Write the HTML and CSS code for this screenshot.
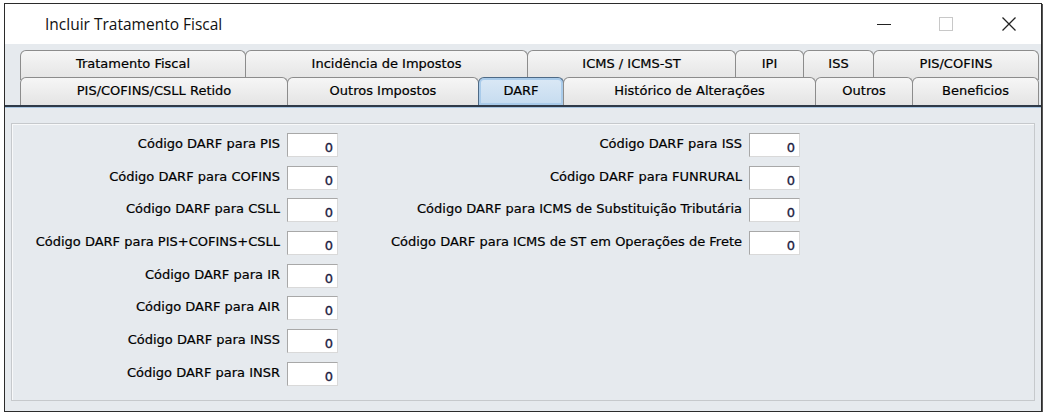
FILE: index.html
```html
<!DOCTYPE html>
<html lang="pt-BR">
<head>
    <meta charset="UTF-8">
    <title>Incluir Tratamento Fiscal</title>
    <link rel="stylesheet" href="styles.css">
</head>
<body>
    <div class="window">
        <div class="titlebar">
            <span class="title">Incluir Tratamento Fiscal</span>
            <div class="controls">
                <span class="btn-min"></span>
                <span class="btn-max"></span>
                <svg class="btn-close" width="16" height="16" viewBox="0 0 16 16">
                    <path d="M1.5 1.5 L14.5 14.5 M14.5 1.5 L1.5 14.5" stroke="#222" stroke-width="1.3" fill="none"/>
                </svg>
            </div>
        </div>
        <div class="body">
            <div class="tabs">
                <div class="tab-row row-1">
                    <div class="tab">Tratamento Fiscal</div>
                    <div class="tab">Incidência de Impostos</div>
                    <div class="tab">ICMS / ICMS-ST</div>
                    <div class="tab">IPI</div>
                    <div class="tab">ISS</div>
                    <div class="tab">PIS/COFINS</div>
                </div>
                <div class="tab-row row-2">
                    <div class="tab">PIS/COFINS/CSLL Retido</div>
                    <div class="tab">Outros Impostos</div>
                    <div class="tab active">DARF</div>
                    <div class="tab">Histórico de Alterações</div>
                    <div class="tab">Outros</div>
                    <div class="tab">Beneficios</div>
                </div>
            </div>
            <div class="tab-line"></div>
            <div class="content">
                <div class="panel">
                    <div class="col col-left">
                        <div class="field"><label>Código DARF para PIS</label><span class="input">0</span></div>
                        <div class="field"><label>Código DARF para COFINS</label><span class="input">0</span></div>
                        <div class="field"><label>Código DARF para CSLL</label><span class="input">0</span></div>
                        <div class="field"><label>Código DARF para PIS+COFINS+CSLL</label><span class="input">0</span></div>
                        <div class="field"><label>Código DARF para IR</label><span class="input">0</span></div>
                        <div class="field"><label>Código DARF para AIR</label><span class="input">0</span></div>
                        <div class="field"><label>Código DARF para INSS</label><span class="input">0</span></div>
                        <div class="field"><label>Código DARF para INSR</label><span class="input">0</span></div>
                    </div>
                    <div class="col col-right">
                        <div class="field"><label>Código DARF para ISS</label><span class="input">0</span></div>
                        <div class="field"><label>Código DARF para FUNRURAL</label><span class="input">0</span></div>
                        <div class="field"><label>Código DARF para ICMS de Substituição Tributária</label><span class="input">0</span></div>
                        <div class="field"><label>Código DARF para ICMS de ST em Operações de Frete</label><span class="input">0</span></div>
                    </div>
                </div>
            </div>
        </div>
    </div>
</body>
</html>
```

FILE: styles.css
```css
body {
    margin: 0;
    background: #fff;
    font-family: "DejaVu Sans", "Liberation Sans", sans-serif;
    color: #000;
}
.window {
    width: 1036px;
    height: 407px;
    margin: 3px 0 0 4px;
    border: 1px solid #2b2b2b;
    box-shadow: 1px 1px 0 #555;
    display: flex;
    flex-direction: column;
    background: #e6eaee;
}
.titlebar {
    height: 40px;
    background: #fff;
    display: flex;
    align-items: center;
    justify-content: space-between;
}
.title {
    font-family: "Open Sans", "Liberation Sans", sans-serif;
    font-size: 15.5px;
    color: #111;
    margin-left: 40px;
}
.controls {
    display: flex;
    align-items: center;
    gap: 48px;
    margin-right: 24px;
}
.btn-min {
    width: 14px;
    height: 1px;
    background: #222;
}
.btn-max {
    width: 12px;
    height: 12px;
    border: 1px solid #c8c8c8;
}
.btn-close {
    display: block;
}

.body {
    flex: 1;
    display: flex;
    flex-direction: column;
}
.tabs {
    padding: 6px 0 0 15px;
}
.tab-row {
    display: flex;
}
.row-1 {
    height: 27px;
}
.row-2 {
    height: 27px;
}
.tab {
    box-sizing: border-box;
    margin-right: -1px;
    border: 1px solid #8c8c8c;
    border-bottom: none;
    border-radius: 6px 6px 0 0;
    background: linear-gradient(#f6f6f6, #e4e4e4);
    font-size: 13px;
    text-align: center;
    padding-top: 5px;
    -webkit-text-stroke: 0.2px #000;
}
.row-1 .tab {
    height: 30px;
}
.row-2 .tab {
    height: 28px;
    padding-top: 5px;
    position: relative;
}
.row-1 .tab:nth-child(1) { width: 226px; }
.row-1 .tab:nth-child(2) { width: 283px; }
.row-1 .tab:nth-child(3) { width: 209px; }
.row-1 .tab:nth-child(4) { width: 69px; }
.row-1 .tab:nth-child(5) { width: 71px; }
.row-1 .tab:nth-child(6) { width: 166px; }
.row-2 .tab:nth-child(1) { width: 268px; }
.row-2 .tab:nth-child(2) { width: 192px; }
.row-2 .tab:nth-child(3) { width: 86px; }
.row-2 .tab:nth-child(4) { width: 253px; }
.row-2 .tab:nth-child(5) { width: 98px; }
.row-2 .tab:nth-child(6) { width: 127px; }
.tab.active {
    background: linear-gradient(#dbe9f6, #c5dbef);
    border-color: #4e6a86;
    box-shadow: inset 0 0 0 2px #a9cbea;
}
.tab-line {
    height: 2px;
    margin-top: 1px;
    background: #2f3a48;
    border-bottom: 1px solid #a9c6e2;
}
.content {
    flex: 1;
    padding: 15px 6px 10px 6px;
    display: flex;
}
.panel {
    flex: 1;
    border: 1px solid #c6c9cc;
    box-shadow: inset 1px 1px 0 #f8f9fa;
    display: flex;
    padding-top: 9px;
}
.col {
    display: flex;
    flex-direction: column;
    gap: 8.7px;
}
.col-left {
    width: 326px;
}
.col-right {
    width: 462px;
}
.field {
    display: flex;
    justify-content: flex-end;
    align-items: center;
    gap: 7px;
}
.field label {
    font-size: 13px;
    margin-bottom: 3px;
    -webkit-text-stroke: 0.2px #000;
}
.input {
    box-sizing: border-box;
    width: 51px;
    height: 24px;
    background: #fff;
    border: 1px solid #a8a8a8;
    border-bottom-color: #d9d9d9;
    border-right-color: #d9d9d9;
    font-size: 13px;
    text-align: right;
    padding: 6px 4px 0 0;
    color: #1a1a40;
    -webkit-text-stroke: 0.3px #1a1a40;
}
```
